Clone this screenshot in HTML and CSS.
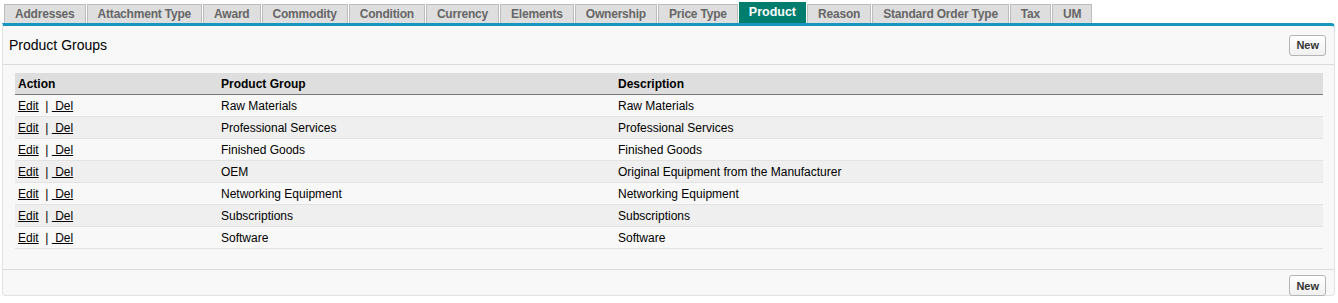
FILE: index.html
```html
<!DOCTYPE html>
<html lang="en">
<head>
    <meta charset="utf-8">
    <title>Product Groups</title>
    <link rel="stylesheet" href="styles.css">
</head>
<body>
    <div class="tabs">
        <a class="tab">Addresses</a>
        <a class="tab">Attachment Type</a>
        <a class="tab">Award</a>
        <a class="tab">Commodity</a>
        <a class="tab">Condition</a>
        <a class="tab">Currency</a>
        <a class="tab">Elements</a>
        <a class="tab">Ownership</a>
        <a class="tab">Price Type</a>
        <a class="tab active">Product</a>
        <a class="tab">Reason</a>
        <a class="tab">Standard Order Type</a>
        <a class="tab">Tax</a>
        <a class="tab">UM</a>
    </div>

    <div class="panel">
        <div class="panel-head">
            <h2>Product Groups</h2>
            <button class="btn">New</button>
        </div>

        <div class="panel-body">
            <table class="list">
                <thead>
                    <tr>
                        <th class="col-action">Action</th>
                        <th class="col-group">Product Group</th>
                        <th>Description</th>
                    </tr>
                </thead>
                <tbody>
                    <tr>
                        <td><a href="#">Edit</a>&nbsp; | <a href="#">&nbsp;Del</a></td>
                        <td>Raw Materials</td>
                        <td>Raw Materials</td>
                    </tr>
                    <tr>
                        <td><a href="#">Edit</a>&nbsp; | <a href="#">&nbsp;Del</a></td>
                        <td>Professional Services</td>
                        <td>Professional Services</td>
                    </tr>
                    <tr>
                        <td><a href="#">Edit</a>&nbsp; | <a href="#">&nbsp;Del</a></td>
                        <td>Finished Goods</td>
                        <td>Finished Goods</td>
                    </tr>
                    <tr>
                        <td><a href="#">Edit</a>&nbsp; | <a href="#">&nbsp;Del</a></td>
                        <td>OEM</td>
                        <td>Original Equipment from the Manufacturer</td>
                    </tr>
                    <tr>
                        <td><a href="#">Edit</a>&nbsp; | <a href="#">&nbsp;Del</a></td>
                        <td>Networking Equipment</td>
                        <td>Networking Equipment</td>
                    </tr>
                    <tr>
                        <td><a href="#">Edit</a>&nbsp; | <a href="#">&nbsp;Del</a></td>
                        <td>Subscriptions</td>
                        <td>Subscriptions</td>
                    </tr>
                    <tr>
                        <td><a href="#">Edit</a>&nbsp; | <a href="#">&nbsp;Del</a></td>
                        <td>Software</td>
                        <td>Software</td>
                    </tr>
                </tbody>
            </table>
        </div>

        <div class="panel-foot">
            <button class="btn">New</button>
        </div>
    </div>
</body>
</html>
```

FILE: styles.css
```css
body {
    margin: 0;
    padding: 2px 3px 0 2px;
    font-family: "Liberation Sans", Arial, sans-serif;
    font-size: 12px;
    color: #222;
    background: #fff;
}

.tabs {
    display: flex;
    align-items: flex-end;
    gap: 1px;
    padding-left: 2px;
    height: 21px;
}

.tab {
    display: block;
    height: 18px;
    line-height: 18px;
    padding: 0 10px;
    background: #dedede;
    border: 1px solid #bdbdbd;
    border-bottom: none;
    color: #666;
    font-weight: bold;
    font-size: 12px;
    letter-spacing: -0.2px;
}

.tab.active {
    height: 20px;
    line-height: 18px;
    padding: 0 9px;
    background: #007d6c;
    border-color: #007d6c;
    color: #fff;
    font-size: 12.5px;
    letter-spacing: 0;
}

.panel {
    background: #f8f8f8;
    border-top: 3px solid #1797c0;
    border-left: 1px solid #e0e3e5;
    border-right: 1px solid #e0e3e5;
    border-bottom: 1px solid #e0e3e5;
    border-radius: 0 4px 4px 4px;
}

.panel-head {
    display: flex;
    align-items: center;
    justify-content: space-between;
    height: 38px;
    padding: 0 8px 0 6px;
    border-bottom: 1px solid #dbdbdb;
}

h2 {
    margin: 0;
    font-size: 14px;
    font-weight: normal;
    color: #000;
}

.btn {
    font-family: "Liberation Sans", Arial, sans-serif;
    font-size: 11px;
    font-weight: bold;
    color: #333;
    height: 21px;
    padding: 0 6px;
    background: linear-gradient(#fff, #f0f0f0);
    border: 1px solid #b5b5b5;
    border-radius: 3px;
}

.panel-body {
    padding: 8px 11px 20px 12px;
}

.list {
    width: 100%;
    border-collapse: collapse;
}

.list th {
    text-align: left;
    background: #dedede;
    color: #000;
    font-size: 12px;
    font-weight: bold;
    height: 21px;
    padding: 0 3px;
    border-bottom: 1px solid #777;
}

.col-action {
    width: 197px;
}

.col-group {
    width: 391px;
}

.list td {
    height: 21px;
    padding: 0 3px;
    color: #000;
    border-bottom: 1px solid #e3e3e3;
}

.list tbody tr:nth-child(even) td {
    background: #efefef;
}

.list a {
    color: #000;
}

.panel-foot {
    display: flex;
    justify-content: flex-end;
    height: 26px;
    padding: 5px 8px 0 0;
    border-top: 1px solid #dbdbdb;
    box-sizing: border-box;
}
```
